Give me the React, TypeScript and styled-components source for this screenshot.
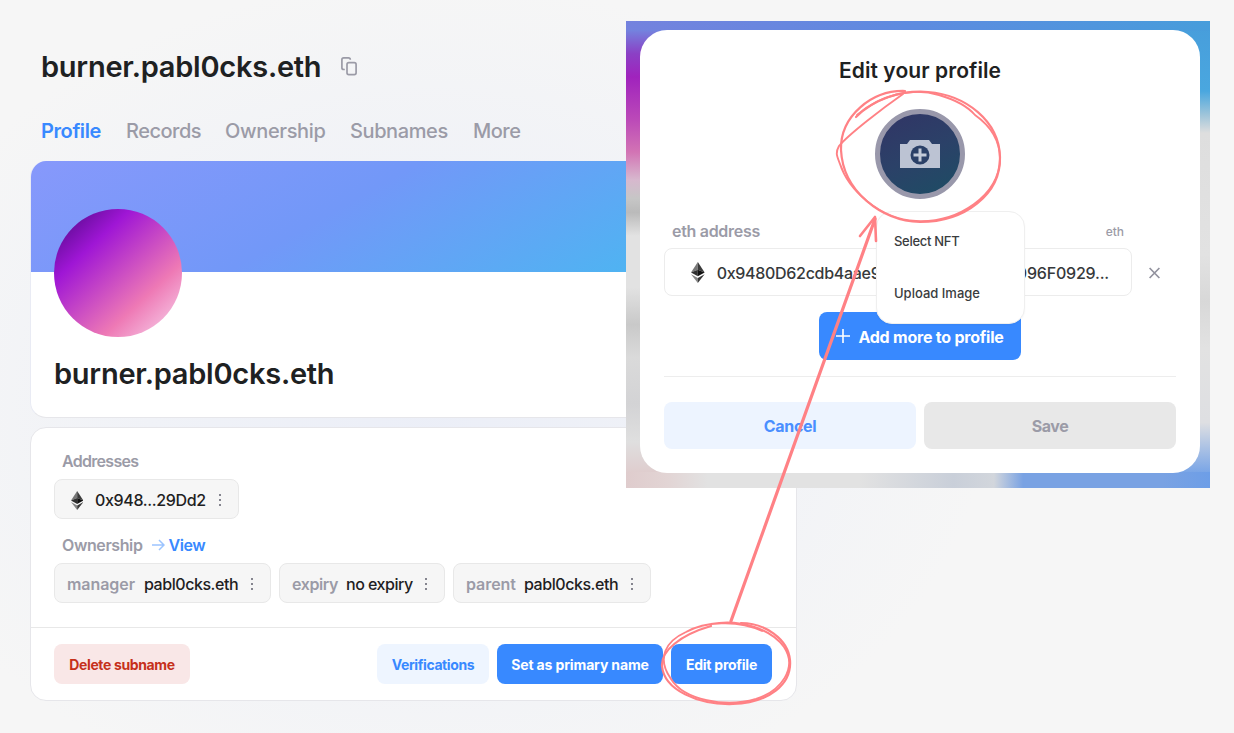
import React from "react";
import styled, { createGlobalStyle } from "styled-components";

const Global = createGlobalStyle`
  *, *::before, *::after { box-sizing: border-box; }
  body {
    margin: 0;
    font-family: Inter, "Liberation Sans", sans-serif;
    color: #1e2122;
    background: #f6f6f6;
  }
  button { font-family: inherit; border: 0; margin: 0; padding: 0; }
  h1, h2 { margin: 0; }
`;

const Page = styled.div`
  position: relative;
  width: 1234px;
  height: 733px;
  overflow: hidden;
  padding: 47px 0 0 30px;
  background: radial-gradient(ellipse 560px 420px at 430px 400px, #ebeef7 0%, #f0f2f7 50%, #f6f6f6 100%);
`;

const Column = styled.main`
  width: 767px;
`;

const Text = styled.span<{ $size?: number; $weight?: number; $color?: string; $track?: number }>`
  font-size: ${(p) => p.$size ?? 16}px;
  font-weight: ${(p) => p.$weight ?? 500};
  color: ${(p) => p.$color ?? "inherit"};
  letter-spacing: ${(p) => p.$track ?? 0}px;
  white-space: nowrap;
`;

const TitleRow = styled.header`
  display: flex;
  align-items: center;
  gap: 17px;
  height: 40px;
  padding-left: 11px;
`;

const CopyIcon = styled.svg`
  margin-bottom: 2px;
`;

const Name = styled.h1`
  font-size: 29px;
  line-height: 40px;
  font-weight: 600;
  letter-spacing: -0.25px;
  width: 283px;
  white-space: nowrap;
`;

const Tabs = styled.nav`
  display: flex;
  height: 30px;
  margin: 29px 0 15px;
  padding-left: 11px;
`;

const Tab = styled.a<{ $w: number; $active?: boolean; $track: number }>`
  width: ${(p) => p.$w}px;
  font-size: 20px;
  line-height: 30px;
  font-weight: ${(p) => (p.$active ? 600 : 500)};
  letter-spacing: ${(p) => p.$track}px;
  white-space: nowrap;
  color: ${(p) => (p.$active ? "#3889ff" : "#9b9ba7")};
`;

const Card = styled.section`
  border: 1px solid #e6e6ea;
  border-radius: 16px;
  background: #fff;
  overflow: hidden;
`;

const ProfileCard = styled(Card)`
  height: 257px;
  margin-bottom: 9px;
  border-top: 0;
  border-left-color: #e9ebf4;
`;

const Banner = styled.div`
  height: 111px;
  margin: 0 -1px;
  background: linear-gradient(330.4deg, #44bcf0 4.54%, #7298f8 59.2%, #a099ff 148.85%);
`;

const Avatar = styled.div`
  width: 128px;
  height: 128px;
  margin: -63px 0 17px 23px;
  border-radius: 50%;
  background: linear-gradient(137deg, #6a0d9f 12%, #9f16d5 29%, #ee79b5 70%, #f6c9e6 94%);
`;

const CardName = styled(Name)`
  margin-left: 23px;
`;

const DetailsCard = styled(Card)`
  height: 274px;
`;

const Details = styled.div`
  height: 199px;
  padding: 21px 23px 0;
`;

const Label = styled.div`
  display: flex;
  align-items: center;
  height: 24px;
  padding-left: 8px;
`;

const Chips = styled.div`
  display: flex;
  gap: 8px;
  margin: 6px 0 14px;
`;

const Chip = styled.div<{ $w: number }>`
  display: flex;
  align-items: center;
  width: ${(p) => p.$w}px;
  height: 40px;
  padding: 2px 12px 0;
  border: 1px solid #e8e8e8;
  border-radius: 8px;
  background: #f6f6f6;
`;

const ChipKey = styled(Text)<{ $w: number }>`
  width: ${(p) => p.$w}px;
`;

const ChipIcon = styled.span`
  display: flex;
  width: 28px;
  padding-left: 4px;
`;

const DotsBox = styled.svg`
  margin-left: auto;
  flex: none;
`;

const ViewLink = styled.a`
  display: flex;
  align-items: center;
  gap: 4px;
  margin-left: 9px;
  color: #3889ff;
`;

const Actions = styled.footer`
  display: flex;
  gap: 8px;
  height: 74px;
  padding: 16px 24px 0 23px;
  border-top: 1px solid #e8e8e8;
`;

const Button = styled.button<{ $w: number; $bg: string; $fg: string; $h?: number; $size?: number; $track?: number }>`
  display: flex;
  align-items: center;
  justify-content: center;
  width: ${(p) => p.$w}px;
  height: ${(p) => p.$h ?? 40}px;
  flex: none;
  border-radius: 8px;
  background: ${(p) => p.$bg};
  color: ${(p) => p.$fg};
  font-size: ${(p) => p.$size ?? 14}px;
  font-weight: 700;
  letter-spacing: ${(p) => p.$track ?? 0}px;
  white-space: nowrap;
`;

const Spacer = styled.div`
  flex: 1;
`;

const Backdrop = styled.aside`
  position: absolute;
  left: 626px;
  top: 21px;
  width: 584px;
  height: 467px;
  padding: 9px 10px 15px 14px;
  background:
    linear-gradient(90deg, #dfcccd 0, #e2d4d4 7%, #e2e2e2 14%, #e2e2e2 40%, #c9cfd9 56%, #d2d6dc 63%, #79a2e3 68%, #79a2e3 92%, #6d9ee7 100%) 0 100% / 100% 16px no-repeat,
    linear-gradient(90deg, #7482de 0, #5d8be0 50%, #479ddb 100%) 0 0 / 100% 10px no-repeat,
    linear-gradient(180deg, #7482de 0, #7482de 2%, #8b40c5 7%, #a023bd 12%, #bb49b8 21%, #d273b4 28%, #d7b8ce 34%, #c6c6c6 38%, #bababa 41%, #e2e2e2 46%, #e2e2e2 57%, #c9c9c9 65%, #dadada 72%, #d3d3d5 82%, #dfdfdf 90%, #dfcccd 97%) 0 0 / 50% 100% no-repeat,
    linear-gradient(180deg, #479ddb 0, #4aa7df 15%, #9dc4da 20%, #dedede 24%, #e2e2e2 50%, #d8d8d8 60%, #e2e2e2 70%, #dedfe2 86%, #6d9ee7 98%) 100% 0 / 50% 100% no-repeat;
`;

const Dialog = styled.div`
  position: relative;
  height: 443px;
  padding: 26px 24px 0;
  border-radius: 27px;
  background: #fff;
`;

const DialogTitle = styled.h2`
  height: 30px;
  line-height: 30px;
  text-align: center;
  font-size: 21px;
  font-weight: 600;
  letter-spacing: 0.08px;
`;

const Upload = styled.div`
  display: flex;
  align-items: center;
  justify-content: center;
  width: 90px;
  height: 90px;
  margin: 23px auto 21px;
  border: 5px solid #9998ab;
  border-radius: 50%;
  background: linear-gradient(155deg, #303766 10%, #2b4168 50%, #1d4d64 100%);
`;

const FieldHead = styled.div`
  display: flex;
  justify-content: space-between;
  align-items: center;
  width: 468px;
  height: 22px;
  padding: 0 8px;
  margin-bottom: 6px;
`;

const FieldRow = styled.div`
  display: flex;
  align-items: center;
  gap: 17px;
`;

const Input = styled.div`
  display: flex;
  align-items: center;
  width: 468px;
  height: 48px;
  padding: 1px 22px 0 26px;
  border: 1px solid #ececec;
  border-radius: 8px;
  color: #36393b;
`;

const AddressStart = styled(Text)`
  margin-left: 12px;
`;

const RemoveIcon = styled.svg`
  margin-top: 2px;
`;

const AddRow = styled.div`
  display: flex;
  justify-content: center;
  height: 65px;
  margin-top: 16px;
  border-bottom: 1px solid #ededed;
`;

const AddText = styled.span`
  margin: 2px 0 0 8px;
`;

const DialogActions = styled.div`
  display: flex;
  gap: 8px;
  margin-top: 25px;
`;

const Menu = styled.div`
  position: absolute;
  left: 236px;
  top: 181px;
  width: 149px;
  height: 113px;
  padding: 18px 17px;
  display: flex;
  flex-direction: column;
  gap: 30px;
  border: 1px solid #efefef;
  border-radius: 16px;
  background: #fff;
  line-height: 22px;
  box-shadow: 0 1px 2px rgba(0, 0, 0, 0.04);
`;

const Annotations = styled.svg`
  position: absolute;
  left: 0;
  top: 0;
  pointer-events: none;
`;

const Eth = ({ h }: { h: number }) => (
  <svg width={(h * 13) / 20} height={h} viewBox="0 0 12 20" preserveAspectRatio="none">
    <path d="M6 0 0 10 6 7.4Z" fill="#777" />
    <path d="M6 0 12 10 6 7.4Z" fill="#3b3b3b" />
    <path d="M0 10 6 7.4V13.6Z" fill="#303030" />
    <path d="M12 10 6 7.4V13.6Z" fill="#111" />
    <path d="M0 11.6 6 15.2V20Z" fill="#858585" />
    <path d="M12 11.6 6 15.2V20Z" fill="#383838" />
  </svg>
);

const Dots = () => (
  <DotsBox width="12" height="14" viewBox="0 0 12 14" fill="#85858f">
    <rect x="5" y="1" width="2" height="2" />
    <rect x="5" y="6" width="2" height="2" />
    <rect x="5" y="11" width="2" height="2" />
  </DotsBox>
);

const GREY = "#9b9ba7";

export default function App() {
  return (
    <Page>
      <Global />
      <Column>
        <TitleRow>
          <Name>burner.pabl0cks.eth</Name>
          <CopyIcon width="16" height="19" viewBox="0 0 16 19" fill="none" stroke="#9b9ba7" strokeWidth="1.7">
            <path d="M3.800 12.500H2.700A1.800 1.800 0 0 1 .9 10.700V2.700A1.800 1.800 0 0 1 2.700 .9H7.500A1.800 1.800 0 0 1 9.300 2.700" />
            <rect x="6" y="5.600" width="9.100" height="12" rx="1.800" />
          </CopyIcon>
        </TitleRow>
        <Tabs>
          <Tab $w={85} $track={-0.4} $active>Profile</Tab>
          <Tab $w={99} $track={-0.5}>Records</Tab>
          <Tab $w={125} $track={-0.35}>Ownership</Tab>
          <Tab $w={123} $track={-0.4}>Subnames</Tab>
          <Tab $w={60} $track={-0.5}>More</Tab>
        </Tabs>
        <ProfileCard>
          <Banner />
          <Avatar />
          <CardName as="h2">burner.pabl0cks.eth</CardName>
        </ProfileCard>
        <DetailsCard>
          <Details>
            <Label><Text $color={GREY} $weight={600} $track={-0.7}>Addresses</Text></Label>
            <Chips>
              <Chip $w={185}>
                <ChipIcon><Eth h={19} /></ChipIcon>
                <Text $track={-0.35}>0x948...29Dd2</Text>
                <Dots />
              </Chip>
            </Chips>
            <Label>
              <Text $color={GREY} $weight={600} $track={-0.4}>Ownership</Text>
              <ViewLink>
                <svg width="13" height="12" viewBox="0 0 13 12" fill="none" stroke="#9cc4ff" strokeWidth="1.500">
                  <path d="M0 6h12M7 1l5 5-5 5" />
                </svg>
                <Text $weight={600} $track={-0.4}>View</Text>
              </ViewLink>
            </Label>
            <Chips>
              <Chip $w={217}>
                <ChipKey $w={77} $color={GREY} $weight={600} $track={-0.05}>manager</ChipKey>
                <Text $track={-0.45}>pabl0cks.eth</Text>
                <Dots />
              </Chip>
              <Chip $w={166}>
                <ChipKey $w={54} $color={GREY} $weight={600} $track={-0.4}>expiry</ChipKey>
                <Text $track={-0.5}>no expiry</Text>
                <Dots />
              </Chip>
              <Chip $w={198}>
                <ChipKey $w={58} $color={GREY} $weight={600} $track={-0.05}>parent</ChipKey>
                <Text $track={-0.45}>pabl0cks.eth</Text>
                <Dots />
              </Chip>
            </Chips>
          </Details>
          <Actions>
            <Button $w={136} $bg="#f9e7e7" $fg="#c6301b" $track={-0.36}>Delete subname</Button>
            <Spacer />
            <Button $w={112} $bg="#eef5ff" $fg="#3889ff" $track={-0.4}>Verifications</Button>
            <Button $w={166} $bg="#3889ff" $fg="#fff" $track={-0.14}>Set as primary name</Button>
            <Button $w={101} $bg="#3889ff" $fg="#fff" $track={-0.24}>Edit profile</Button>
          </Actions>
        </DetailsCard>
      </Column>

      <Backdrop>
        <Dialog>
          <DialogTitle>Edit your profile</DialogTitle>
          <Upload>
            <svg width="40" height="28" viewBox="0 0 40 28">
              <path d="M0 4H7L10 0H29L32 4H40V28H0Z" fill="#bcc3d3" />
              <circle cx="20" cy="15" r="9.500" fill="#2b4067" />
              <path d="M20 8.500V21.500M13.500 15H26.500" stroke="#c3cad8" strokeWidth="3" />
            </svg>
          </Upload>
          <FieldHead>
            <Text $color={GREY} $weight={600} $track={-0.3}>eth address</Text>
            <Text $color={GREY} $size={12}>eth</Text>
          </FieldHead>
          <FieldRow>
            <Input>
              <Eth h={21} />
              <AddressStart $track={-0.3}>0x9480D62cdb4aae9</AddressStart>
              <Spacer />
              <Text $track={-0.2}>096F0929...</Text>
            </Input>
            <RemoveIcon width="11" height="12" viewBox="0 0 11 12" stroke="#92929e" strokeWidth="1.700">
              <path d="M.6 1 10.400 11M10.400 1 .6 11" />
            </RemoveIcon>
          </FieldRow>
          <AddRow>
            <Button $w={202} $h={48} $bg="#3889ff" $fg="#fff" $size={16} $track={-0.22}>
              <svg width="14" height="14" viewBox="0 0 14 14" stroke="#fff" strokeWidth="1.600">
                <path d="M7 0v14M0 7h14" />
              </svg>
              <AddText>Add more to profile</AddText>
            </Button>
          </AddRow>
          <DialogActions>
            <Button $w={252} $h={47} $bg="#edf4ff" $fg="#4a8fff" $size={16} $track={-0.35}>Cancel</Button>
            <Button $w={252} $h={47} $bg="#e8e8e8" $fg="#9b9ba7" $size={16} $track={-0.5}>Save</Button>
          </DialogActions>
          <Menu>
            <Text $size={13} $track={-0.3} $color="#3a3c3e">Select NFT</Text>
            <Text $size={13} $track={0} $color="#3a3c3e">Upload Image</Text>
          </Menu>
        </Dialog>
      </Backdrop>

      <Annotations width="1234" height="733" viewBox="0 0 1234 733" fill="none" stroke="#ff8185" strokeLinecap="round" strokeLinejoin="round">
        <path d="M731 621 875 219" strokeWidth="3.200" />
        <path d="M860 236 875 217 876 241" strokeWidth="2.600" />
        <path d="M856 117C874 99 901 90 928 92C966 95 999 121 1000 157C1001 194 965 222 920 222C881 221 843 191 841 150C840 116 872 90 905 91" strokeWidth="2.200" />
        <path d="M857 115C880 95 912 87 939 95C956 100 969 108 975 115C992 127 1000 142 1000 159C999 195 959 223 916 221C879 219 848 189 840 164C837 156 835 153 839 146C849 134 883 108 903 94" strokeWidth="1.900" />
        <path d="M711 626C680 635 661 651 662 666C664 690 698 705 733 704C769 703 792 684 790 660C788 639 765 623 741 623" strokeWidth="2.200" />
        <path d="M711 624C741 618 772 630 784 647C798 668 781 691 756 699C725 708 684 700 671 679C656 658 666 641 686 632C704 622 737 619 762 631" strokeWidth="1.900" />
      </Annotations>
    </Page>
  );
}
